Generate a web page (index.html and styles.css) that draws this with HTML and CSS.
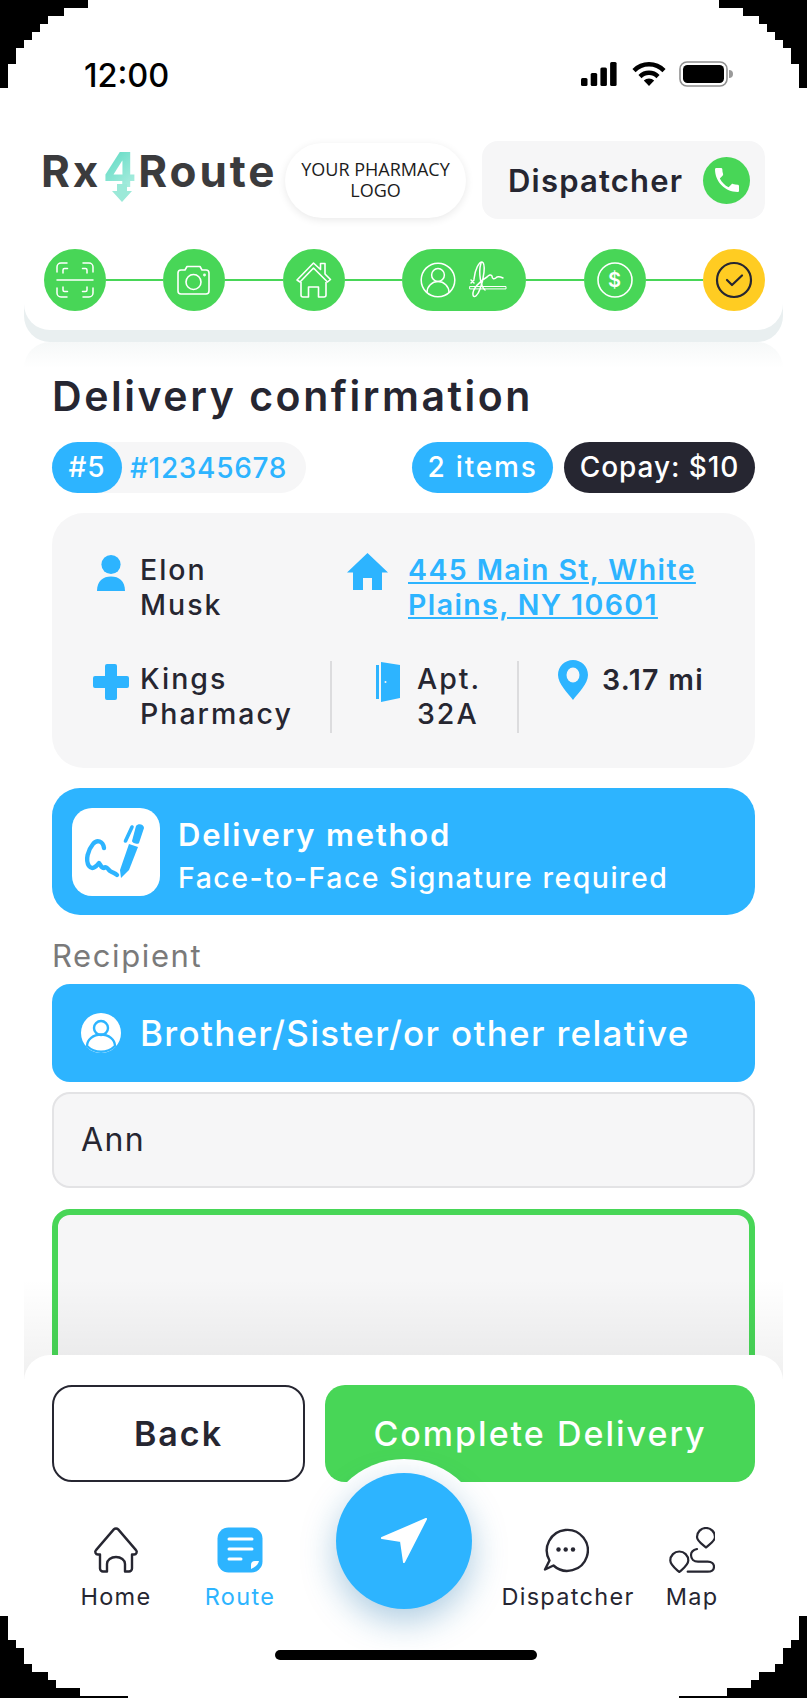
FILE: index.html
```html
<!DOCTYPE html>
<html lang="en">
<head>
    <meta charset="UTF-8">
    <meta name="viewport" content="width=device-width, initial-scale=1.0">
    <title>Rx4Route - Delivery confirmation</title>
    <link rel="stylesheet" href="styles.css">
</head>
<body>
    <div class="phone">
        <div class="status">
            <span class="time">12:00</span>
            <div class="status-icons">
                <svg width="36" height="24" viewBox="0 0 36 24" fill="#000">
                    <rect x="0" y="16" width="6.5" height="8" rx="1.5"/>
                    <rect x="9.7" y="11" width="6.5" height="13" rx="1.5"/>
                    <rect x="19.4" y="5.5" width="6.5" height="18.5" rx="1.5"/>
                    <rect x="29.1" y="0" width="6.5" height="24" rx="1.5"/>
                </svg>
                <svg width="34" height="24" viewBox="0 0 34 24" fill="none" stroke="#000" stroke-width="4.4">
                    <path d="M2 8.6 A21 21 0 0 1 32 8.6"/>
                    <path d="M8 14.6 A12.6 12.6 0 0 1 26 14.6"/>
                    <path d="M17 24 L11.8 18.6 A7.4 7.4 0 0 1 22.2 18.6 Z" fill="#000" stroke="none"/>
                </svg>
                <svg class="battery" width="54" height="26" viewBox="0 0 54 26">
                    <rect x="1" y="1" width="47" height="24" rx="7" fill="none" stroke="#8f8f8f" stroke-width="1.6"/>
                    <rect x="4" y="4" width="41" height="18" rx="4.5" fill="#000"/>
                    <path d="M50 9 a4 4 0 0 1 0 8 Z" fill="#9a9a9a"/>
                </svg>
            </div>
        </div>

        <div class="top-card">
            <div class="header">
                <div class="logo">Rx<span class="logo-four">4<svg class="logo-arrow" width="20" height="18" viewBox="0 0 20 18"><path d="M5 0 H15 V7 H20 L10 18 L0 7 H5 Z" fill="#9be9d8"/></svg></span>Route</div>
                <div class="pharmacy-logo">YOUR PHARMACY<br>LOGO</div>
                <div class="dispatcher">
                    <span>Dispatcher</span>
                    <span class="phone-circle">
                        <svg width="32" height="32" viewBox="0 0 24 24" fill="#fff"><path d="M6.62 10.79c1.44 2.83 3.76 5.14 6.59 6.59l2.2-2.2c.27-.27.67-.36 1.02-.24 1.12.37 2.33.57 3.57.57.55 0 1 .45 1 1V20c0 .55-.45 1-1 1-9.39 0-17-7.61-17-17 0-.55.45-1 1-1h3.5c.55 0 1 .45 1 1 0 1.25.2 2.45.57 3.57.11.35.03.74-.25 1.02l-2.2 2.2z"/></svg>
                    </span>
                </div>
            </div>

            <div class="steps">
                <span class="step">
                    <svg width="62" height="62" viewBox="0 0 62 62" fill="none" stroke="#fff" stroke-width="1.5" stroke-linecap="round">
                        <path d="M13 23 V18 a4 4 0 0 1 4-4 h6"/><path d="M49 23 V18 a4 4 0 0 0-4-4 h-6"/>
                        <path d="M13 39 V44 a4 4 0 0 0 4 4 h6"/><path d="M49 39 V44 a4 4 0 0 1-4 4 h-6"/>
                        <path d="M19 24 v-3 a1.5 1.5 0 0 1 1.5-1.5 h3"/><path d="M43 24 v-3 a1.5 1.5 0 0 0-1.5-1.5 h-3"/>
                        <path d="M19 38 v3 a1.5 1.5 0 0 0 1.5 1.5 h3"/><path d="M43 38 v3 a1.5 1.5 0 0 1-1.5 1.5 h-3"/>
                        <path d="M13 31 H49"/>
                    </svg>
                </span>
                <i class="line"></i>
                <span class="step">
                    <svg width="62" height="62" viewBox="0 0 62 62" fill="none" stroke="#fff" stroke-width="1.6" stroke-linejoin="round">
                        <path d="M18 21 h4 l2-3.5 h13 l2 3.5 h4 a3 3 0 0 1 3 3 v18 a3 3 0 0 1-3 3 h-25 a3 3 0 0 1-3-3 v-18 a3 3 0 0 1 3-3 Z"/>
                        <circle cx="30.5" cy="33" r="7.5"/>
                        <circle cx="41.5" cy="26" r="0.6"/>
                    </svg>
                </span>
                <i class="line"></i>
                <span class="step">
                    <svg width="62" height="62" viewBox="0 0 62 62" fill="none" stroke="#fff" stroke-width="1.6" stroke-linejoin="round">
                        <path d="M18 33 V46 a2 2 0 0 0 2 2 h5.5 V38 h10 V48 h5.5 a2 2 0 0 0 2-2 V33"/>
                        <path d="M14 31 L30.5 14 L37.5 20.5 V14.5 H42 V25 L47.5 30.5 L44.5 33 L30.5 19 L17 33 Z"/>
                    </svg>
                </span>
                <i class="line"></i>
                <span class="step step-wide">
                    <svg width="124" height="62" viewBox="0 0 124 62" fill="none" stroke="#fff" stroke-width="1.5" stroke-linecap="round" stroke-linejoin="round">
                        <circle cx="36" cy="31" r="16.8"/>
                        <circle cx="36" cy="26" r="6.4"/>
                        <path d="M25 43.5 a11 11 0 0 1 22 0"/>
                        <path d="M72 30 C73 20 77 13 80 13 C84 14 82 30 78 40 C76 46 72 50 71 46 C70 40 78 32 85 28 C87 26 89 25 90 27 C90 30 92 31 95 28 C97 27 99 28 101 29"/>
                        <path d="M79 14 C76 24 79 38 83 41"/>
                        <rect x="68" y="37.5" width="36" height="2.4" stroke-width="1"/>
                        <path d="M69 31 l3 3 M72 31 l-3 3"/>
                    </svg>
                </span>
                <i class="line"></i>
                <span class="step">
                    <svg width="62" height="62" viewBox="0 0 62 62" fill="none" stroke="#fff" stroke-width="1.6"><circle cx="31" cy="31" r="17"/></svg>
                    <b class="dollar">$</b>
                </span>
                <i class="line"></i>
                <span class="step step-active">
                    <svg width="62" height="62" viewBox="0 0 62 62" fill="none" stroke="#262631" stroke-width="2.2" stroke-linecap="round" stroke-linejoin="round">
                        <circle cx="31" cy="31" r="17"/>
                        <path d="M24 31 l5 5 l10 -9.5"/>
                    </svg>
                </span>
            </div>
        </div>

        <div class="content">
            <h1>Delivery confirmation</h1>

            <div class="tags">
                <div class="order">
                    <span class="order-num">#5</span>
                    <span class="order-id">#12345678</span>
                </div>
                <div class="tags-right">
                    <span class="tag tag-blue">2 items</span>
                    <span class="tag tag-dark">Copay: $10</span>
                </div>
            </div>

            <div class="info">
                <div class="info-row">
                    <div class="cell cell-name">
                        <span class="cell-icon">
                            <svg width="28" height="36" viewBox="0 0 28 36" fill="#2db4ff"><ellipse cx="14" cy="9.5" rx="9.6" ry="9.5"/><path d="M0 36 C0 26 6 21.5 14 21.5 S28 26 28 36 Z"/></svg>
                        </span>
                        <span>Elon<br>Musk</span>
                    </div>
                    <div class="cell cell-address">
                        <svg width="41" height="37" viewBox="0 0 41 37" fill="#2db4ff"><path d="M20.5 0 L41 19.5 H35 V37 H25 V25 H16 V37 H6 V19.5 H0 Z"/></svg>
                        <a href="#" class="address">445 Main St, White<br>Plains, NY 10601</a>
                    </div>
                </div>
                <div class="info-row">
                    <div class="cell cell-pharmacy">
                        <span class="cell-icon">
                            <svg width="36" height="36" viewBox="0 0 36 36" fill="#2db4ff"><path d="M14 0 H22 a2 2 0 0 1 2 2 V12 H34 a2 2 0 0 1 2 2 V22 a2 2 0 0 1-2 2 H24 V34 a2 2 0 0 1-2 2 H14 a2 2 0 0 1-2-2 V24 H2 a2 2 0 0 1-2-2 V14 a2 2 0 0 1 2-2 H12 V2 a2 2 0 0 1 2-2 Z"/></svg>
                        </span>
                        <span>Kings<br>Pharmacy</span>
                    </div>
                    <div class="cell cell-apt">
                        <svg width="24" height="40" viewBox="0 0 24 40" fill="#2db4ff"><rect x="0" y="3" width="3" height="34"/><path d="M5 0 L24 3 V36 L5 40 Z"/><circle cx="9.5" cy="20" r="1" fill="#f6f6f7"/></svg>
                        <span>Apt.<br>32A</span>
                    </div>
                    <div class="cell cell-dist">
                        <svg width="30" height="40" viewBox="0 0 30 40"><path d="M15 0 C6.7 0 0 6.6 0 15 C0 24 10 33 15 40 C20 33 30 24 30 15 C30 6.6 23.3 0 15 0 Z" fill="#2db4ff"/><ellipse cx="15" cy="15" rx="6.5" ry="7.5" fill="#f6f6f7"/></svg>
                        <span class="dist">3.17 mi</span>
                    </div>
                </div>
            </div>

            <div class="method">
                <div class="method-icon">
                    <svg width="88" height="88" viewBox="0 0 88 88" fill="none" stroke="#2db4ff">
                        <path d="M32 40 C31 33 25 31 21 36 C16 42 13 52 17 58 C20 62 24 59 27 55 C29 57 29 60 32 60 C34 58 36 61 38 63 C41 65 43 65 45 67" stroke-width="4.4" stroke-linecap="round" stroke-linejoin="round"/>
                        <path d="M49 70 L48 62 L57 36 L66 39 L57 62 Z" fill="#2db4ff" stroke="none"/>
                        <path d="M53.5 33 L60 19" stroke-width="3.6" stroke-linecap="round"/>
                        <path d="M64 18 C66 15 72 16 72 20 L67 35 C66 37 60 35 60 33 Z" fill="#2db4ff" stroke="none"/>
                    </svg>
                </div>
                <div class="method-text">
                    <div class="method-title">Delivery method</div>
                    <div class="method-sub">Face-to-Face Signature required</div>
                </div>
            </div>

            <div class="label">Recipient</div>
            <div class="select">
                <svg width="40" height="40" viewBox="0 0 40 40"><circle cx="20" cy="20" r="20" fill="#fff"/><circle cx="20" cy="15" r="7" fill="none" stroke="#2db4ff" stroke-width="2.4"/><path d="M6 33 a14 11.5 0 0 1 28 0 a20 20 0 0 1-28 0 Z" fill="none" stroke="#2db4ff" stroke-width="2.4"/></svg>
                <span>Brother/Sister/or other relative</span>
            </div>
            <div class="input">Ann</div>
            <div class="signature"></div>
        </div>

        <div class="footer">
            <div class="buttons">
                <button class="btn btn-back">Back</button>
                <button class="btn btn-complete">Complete Delivery</button>
            </div>
            <div class="nav">
                <div class="nav-item">
                    <svg width="46" height="46" viewBox="0 0 46 46" fill="none" stroke="#262631" stroke-width="2.4" stroke-linejoin="round">
                        <path d="M14 44.5 H10 a3 3 0 0 1-3-3 V27.5 H5 a2.6 2.6 0 0 1-2-4.4 L20.8 2.4 a3 3 0 0 1 4.4 0 L43 23.1 a2.6 2.6 0 0 1-2 4.4 H39 V41.5 a3 3 0 0 1-3 3 H32 V37 a9 7 0 0 0-18 0 Z"/>
                    </svg>
                    <span>Home</span>
                </div>
                <div class="nav-item nav-active">
                    <svg width="46" height="46" viewBox="0 0 46 46" fill="none" stroke="#fff" stroke-width="3" stroke-linecap="round">
                        <rect x="0.5" y="0.5" width="45" height="45" rx="11" fill="#2db4ff" stroke="none"/>
                        <path d="M12 12 H35"/><path d="M12 22 H35"/><path d="M12 32 H24"/>
                        <path d="M34 42 L34 38 Q34 34 38 34 L42 34 Q41 39 34 42 Z" fill="#fff" stroke="none"/>
                    </svg>
                    <span>Route</span>
                </div>
                <div class="nav-space"></div>
                <div class="nav-item">
                    <svg class="chat-icon" width="46" height="46" viewBox="0 0 46 46" fill="none" stroke="#262631" stroke-width="2.4" stroke-linejoin="round">
                        <path d="M6.5 33.5 A20.5 20.5 0 1 1 10.5 38.5 L2 42.5 Z"/>
                        <circle cx="15.5" cy="22.5" r="2.2" fill="#262631" stroke="none"/>
                        <circle cx="22.7" cy="22.5" r="2.2" fill="#262631" stroke="none"/>
                        <circle cx="30" cy="22.5" r="2.2" fill="#262631" stroke="none"/>
                    </svg>
                    <span>Dispatcher</span>
                </div>
                <div class="nav-item">
                    <svg width="46" height="46" viewBox="0 0 46 46" fill="none" stroke="#262631" stroke-width="2.2" stroke-linecap="round" stroke-linejoin="round">
                        <path d="M37 20.5 C33 17 28 14 28 10 a9 9 0 0 1 18 0 C46 14 41 17 37 20.5 Z"/>
                        <path d="M10.3 45 C6.3 41.5 1.3 38 1.3 33.5 a9 9 0 0 1 18 0 C19.3 38 14.3 41.5 10.3 45 Z"/>
                        <path d="M28 22 C24 23 22 25 22 28 C22 32 25 34.7 29 34.7 H38.7 C42.7 34.7 45 37 45 39.7 C45 42.7 42.7 44.7 38.7 44.7 H18.7"/>
                    </svg>
                    <span>Map</span>
                </div>
            </div>
            <div class="home-bar"></div>
        </div>

        <!-- floats over the button row -->
        <div class="fab-ring"></div>
        <div class="fab">
            <svg width="60" height="60" viewBox="0 0 60 60" fill="#fff" stroke="#fff" stroke-width="2" stroke-linejoin="round"><path d="M52 8 L8 27 L27 30 L30 51 Z"/></svg>
        </div>

        <!-- black stepped screen corners -->
        <svg class="corners" width="807" height="1698" viewBox="0 0 807 1698" fill="#000">
            <path d="M0 0 H88 V8 H64 V16 H48 V24 H40 V32 H32 V40 H24 V48 H16 V64 H8 V88 H0 Z"/>
            <path d="M807 0 H719 V8 H743 V16 H759 V24 H767 V32 H775 V40 H783 V48 H791 V64 H799 V88 H807 Z"/>
            <path d="M0 1698 V1616 H8 V1640 H16 V1648 H24 V1664 H32 V1672 H48 V1680 H56 V1688 H80 V1696 H128 V1698 Z"/>
            <path d="M807 1698 V1616 H799 V1640 H791 V1648 H783 V1664 H775 V1672 H759 V1680 H751 V1688 H727 V1696 H679 V1698 Z"/>
        </svg>
    </div>
</body>
</html>
```

FILE: styles.css
```css
* { box-sizing: border-box; }
html, body { margin: 0; padding: 0; background: #000; }
body { font-family: Inter, "Liberation Sans", sans-serif; color: #262631; }

.phone { position: relative; width: 807px; height: 1698px; background: #fff; overflow: hidden; }

/* status bar */
.status { height: 141px; display: flex; justify-content: space-between; align-items: flex-start; padding: 53px 74px 0 84px; }
.time { font-size: 32.5px; line-height: 42px; font-weight: 500; color: #000; margin-top: 2px; }
.status-icons { display: flex; align-items: center; gap: 15px; padding-top: 8px; }
.battery { margin-left: -2px; }

/* header card */
.top-card { position: relative; margin: 0 24px; padding: 0 18px 19px 17px; background: #fff; border-radius: 0 0 26px 26px; box-shadow: 0 12px 0 #e9eff0; }
.header { display: flex; align-items: flex-start; height: 78px; }
.logo { width: 244px; font-size: 44px; line-height: 52px; font-weight: 700; color: #3b3b3d; margin-top: 3px; letter-spacing: 2.9px; display: flex; align-items: baseline; }
.logo-four { position: relative; width: 37px; text-align: center; font-size: 48px; font-weight: 800; letter-spacing: 0; color: #7fe3cf; background: linear-gradient(135deg, #4fd6bd, #bdf2e6); -webkit-background-clip: text; background-clip: text; -webkit-text-fill-color: transparent; }
.logo-arrow { position: absolute; left: 11px; top: 40px; }
.pharmacy-logo { width: 181px; height: 75px; margin-top: 2px; border-radius: 38px; background: #fff; box-shadow: 0 2px 8px rgba(0, 0, 0, 0.09); text-align: center; font-family: "Open Sans", sans-serif; font-size: 18px; line-height: 21px; color: #1c1c1c; padding-top: 16px; }
.dispatcher { width: 283px; height: 78px; margin-left: 16px; background: #f6f6f7; border-radius: 16px; display: flex; align-items: center; justify-content: space-between; padding: 0 15px 0 26px; font-size: 31px; font-weight: 600; letter-spacing: 1.2px; }
.phone-circle { width: 47px; height: 47px; border-radius: 50%; background: #48d657; display: flex; align-items: center; justify-content: center; }

.steps { display: flex; align-items: center; margin: 30px 0 0 3px; }
.step { position: relative; flex: none; width: 62px; height: 62px; border-radius: 31px; background: #48d657; display: block; }
.step svg { display: block; }
.step-wide { width: 124px; }
.step-active { background: #ffcc22; }
.line { flex: 1; height: 2.5px; background: #48d657; }
.dollar { position: absolute; left: 0; right: 0; top: 0; line-height: 62px; text-align: center; color: #fff; font-size: 20px; font-weight: 600; }

/* main sheet */
.content { position: relative; height: 1037px; margin: 12px 24px 0; padding: 30px 28px 0; background: linear-gradient(#f6f8f8, #fff 26px); border-radius: 26px 26px 0 0; overflow: hidden; }
.content::after { content: ""; position: absolute; left: 0; right: 0; bottom: 0; height: 100px; background: linear-gradient(rgba(0, 0, 0, 0), rgba(0, 0, 0, 0.06)); }
h1 { margin: 0 0 22px; font-size: 41px; line-height: 48px; font-weight: 600; letter-spacing: 2.55px; }

.tags { display: flex; justify-content: space-between; height: 51px; font-size: 28px; font-weight: 500; }
.order { width: 254px; display: flex; align-items: center; background: #f6f6f7; border-radius: 26px; }
.order-num { width: 70px; height: 51px; border-radius: 26px; background: #2db4ff; color: #fff; text-align: center; line-height: 51px; letter-spacing: 1px; }
.order-id { margin-left: 8px; color: #2db4ff; letter-spacing: 0.7px; }
.tags-right { display: flex; gap: 11px; }
.tag { height: 51px; line-height: 51px; border-radius: 26px; text-align: center; color: #fff; }
.tag-blue { width: 141px; background: #2db4ff; letter-spacing: 1.8px; }
.tag-dark { width: 191px; background: #262631; letter-spacing: 0.9px; }

.info { margin-top: 20px; height: 255px; padding: 39px 0 0 41px; background: #f6f6f7; border-radius: 32px; font-size: 28.5px; line-height: 35px; font-weight: 500; letter-spacing: 2px; }
.info-row { display: flex; height: 70px; margin-bottom: 39px; }
.cell { display: flex; align-items: flex-start; }
.cell-icon { width: 36px; margin-right: 11px; display: flex; justify-content: center; }
.cell svg { flex: none; }
.cell-name { width: 254px; }
.cell-name svg { margin-top: 3px; }
.cell-address svg { margin: 1px 20px 0 0; }
.address { color: #2db4ff; font-weight: 600; letter-spacing: 1.4px; }
.cell-pharmacy { width: 237px; }
.cell-pharmacy svg { margin-top: 3px; }
.cell-apt { width: 187px; height: 72px; padding-left: 44px; border-left: 2px solid #dcdcde; }
.cell-apt svg { margin: 1px 17px 0 0; }
.cell-dist { height: 72px; padding-left: 39px; border-left: 2px solid #dcdcde; }
.cell-dist svg { margin: -1px 14px 0 0; }
.dist { font-weight: 600; line-height: 37px; letter-spacing: 1.3px; }

.method { margin-top: 20px; height: 127px; display: flex; align-items: center; gap: 18px; padding-left: 20px; background: #2db4ff; border-radius: 28px; color: #fff; }
.method-icon { width: 88px; height: 88px; background: #fff; border-radius: 20px; }
.method-text { padding-top: 9px; }
.method-title { font-size: 31px; line-height: 43px; font-weight: 600; letter-spacing: 1.8px; }
.method-sub { font-size: 28.5px; line-height: 43px; font-weight: 500; letter-spacing: 1.5px; }

.label { margin: 23px 0 10px; font-size: 31px; line-height: 36px; color: #7a7a7a; letter-spacing: 1.6px; }
.select { height: 98px; display: flex; align-items: center; gap: 19px; padding-left: 29px; background: #2db4ff; border-radius: 18px; color: #fff; font-size: 35px; font-weight: 500; letter-spacing: 1.3px; }
.input { margin-top: 10px; height: 96px; padding-left: 27px; line-height: 92px; font-size: 32px; background: #f6f6f7; border: 2px solid #e3e3e5; border-radius: 18px; letter-spacing: 1.4px; }
.signature { margin-top: 21px; height: 260px; background: #f6f6f7; border: 6px solid #48d657; border-radius: 18px; }

/* bottom panel */
.footer { position: relative; margin: -24px 24px 0; padding: 30px 28px 0; background: #fff; border-radius: 26px 26px 0 0; }
.buttons { display: flex; gap: 20px; }
.btn { height: 97px; border-radius: 20px; font-family: inherit; font-size: 34px; letter-spacing: 2px; }
.btn-back { width: 253px; background: #fff; border: 2px solid #262631; color: #262631; font-weight: 600; }
.btn-complete { flex: 1; background: #48d657; border: none; color: #fff; font-weight: 500; padding-bottom: 2px; }

.nav { display: flex; margin: 45px 0 0 2px; }
.nav-item { width: 124px; display: flex; flex-direction: column; align-items: center; gap: 9px; font-size: 23.5px; line-height: 30px; letter-spacing: 1.3px; }
.nav-active { color: #2db4ff; }
.nav-space { width: 204px; }
.chat-icon { margin-right: 4px; }
.home-bar { width: 262px; height: 10px; margin: 38px auto 0; border-radius: 5px; background: #000; transform: translateX(2px); }

.fab-ring { position: absolute; left: 321.5px; top: 1459px; width: 164px; height: 164px; border-radius: 50%; background: #fff; clip-path: inset(0 0 50% 0); }
.fab { position: absolute; left: 335.5px; top: 1473px; width: 136px; height: 136px; border-radius: 50%; background: #2db4ff; box-shadow: 0 12px 34px rgba(20, 110, 170, 0.35); display: flex; align-items: center; justify-content: center; }

.corners { position: absolute; left: 0; top: 0; pointer-events: none; }
```
